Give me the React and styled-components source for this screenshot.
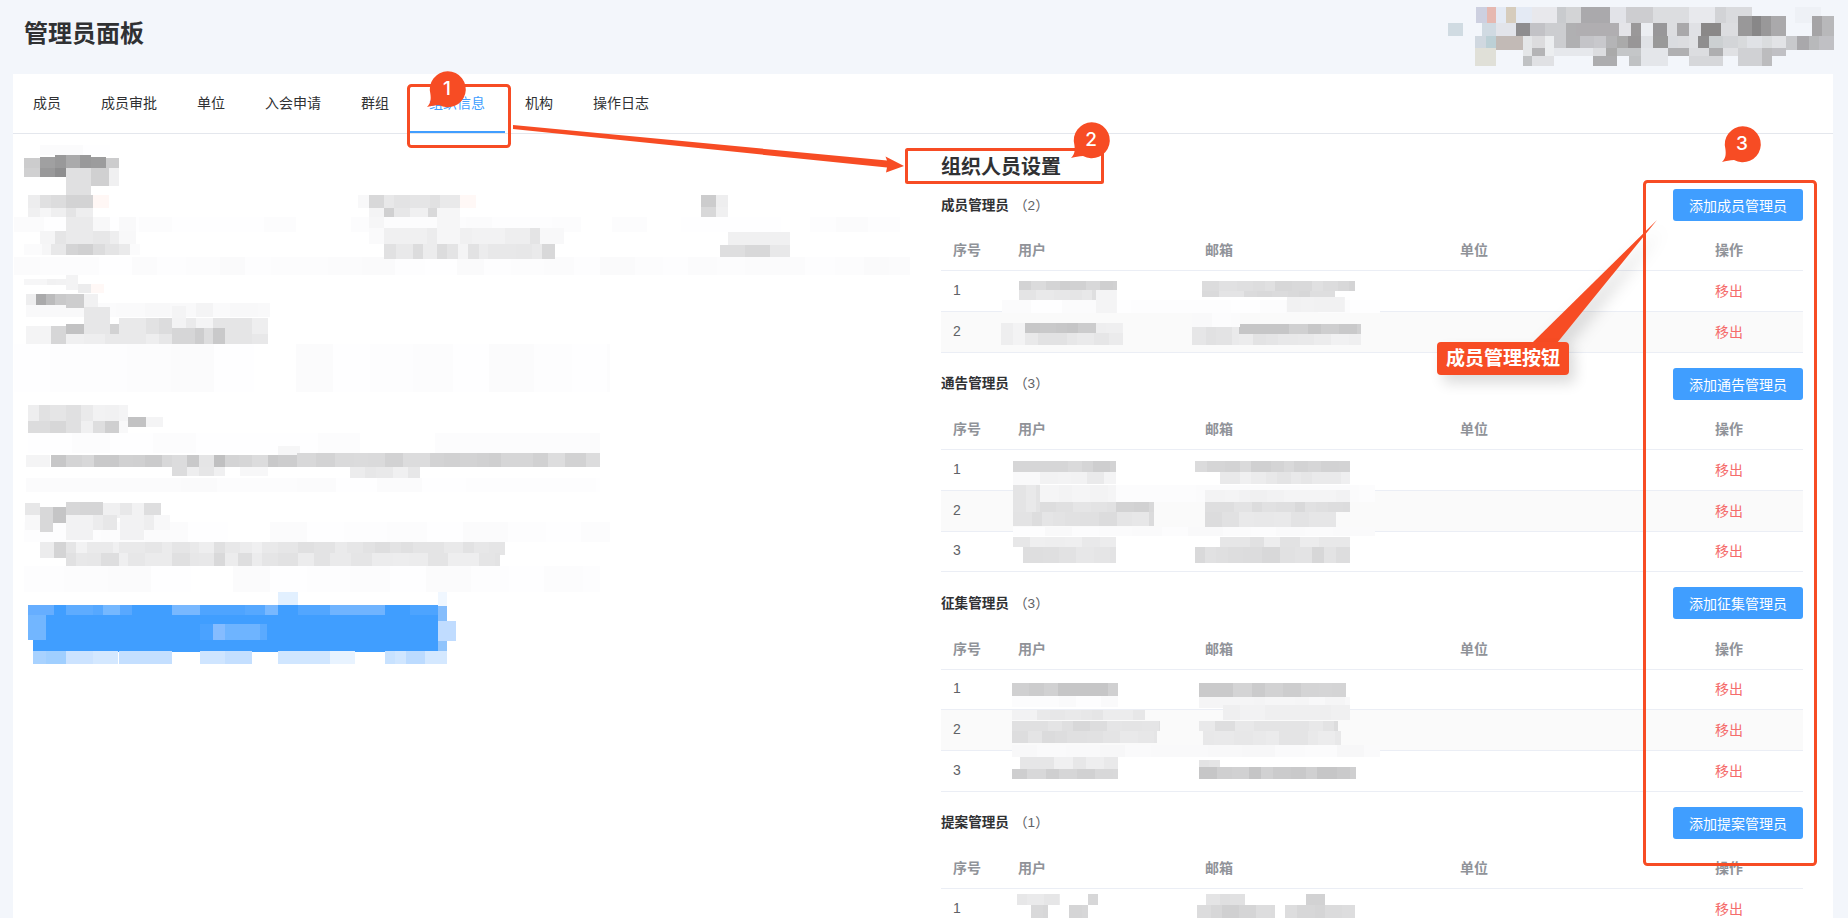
import styled, { createGlobalStyle } from "styled-components";

const GlobalStyle = createGlobalStyle`
  html, body {
    margin: 0;
    height: 918px;
    overflow: hidden;
    background: #f3f6fb;
    font-family: "Liberation Sans", "Noto Sans CJK SC", sans-serif;
  }
`;

const Page = styled.div`
  position: relative;
  width: 1848px;
  height: 918px;
  overflow: hidden;
`;

const Header = styled.header`
  display: flex;
  justify-content: space-between;
  height: 74px;
  padding: 0 14px 0 24px;
`;

const Title = styled.h1`
  margin: 0;
  padding-top: 18px;
  font-size: 24px;
  line-height: 32px;
  font-weight: 600;
  color: #303133;
`;

const Panel = styled.main`
  width: 1820px;
  height: 844px;
  margin-left: 13px;
  background: #fff;
  overflow: hidden;
`;

const Tabs = styled.nav`
  display: flex;
  height: 59px;
  border-bottom: 1px solid #e4e7ed;
`;

const Tab = styled.div`
  padding: 0 20px;
  font-size: 14px;
  line-height: 59px;
  color: ${(p) => (p.$active ? "#409eff" : "#303133")};
  box-shadow: ${(p) => (p.$active ? "inset 0 -2px 0 #409eff" : "none")};
`;

const Body = styled.div`
  display: flex;
`;

const LeftCol = styled.section`
  width: 928px;
  flex: none;
`;

const RightCol = styled.section`
  position: relative;
  width: 862px;
  flex: none;
`;

const Heading = styled.h2`
  margin: 0;
  padding: 19px 0 8px;
  font-size: 20px;
  line-height: 28px;
  font-weight: 600;
  color: #303133;
`;

const Section = styled.div`
  margin-bottom: 15px;
`;

const SectionHead = styled.div`
  display: flex;
  justify-content: space-between;
  align-items: center;
  margin-bottom: 9.4px;
`;

const SectionName = styled.span`
  padding-bottom: 3px;
  font-size: 13.6px;
  font-weight: 600;
  color: #303133;
  b {
    margin-left: 5px;
    font-weight: 400;
    color: #606266;
  }
`;

const AddButton = styled.button`
  width: 130px;
  height: 32px;
  padding: 0;
  border: 0;
  border-radius: 3px;
  background: #409eff;
  color: #fff;
  font: inherit;
  font-size: 14px;
`;

const Row = styled.div`
  display: grid;
  grid-template-columns: 65px 187px 255px 207px 148px;
  align-items: center;
  height: 40.8px;
  padding-bottom: 2px;
  box-sizing: border-box;
  border-bottom: 1px solid #ebeef5;
  background: ${(p) => (p.$striped ? "#fafafa" : "transparent")};
  font-size: 14px;
  font-weight: ${(p) => (p.$head ? 600 : 400)};
  color: ${(p) => (p.$head ? "#909399" : "#606266")};
`;

const Cell = styled.div`
  padding-left: ${(p) => (p.$center ? 0 : "12px")};
  text-align: ${(p) => (p.$center ? "center" : "left")};
`;

const RemoveLink = styled.span`
  color: #f56c6c;
`;

const MosaicOverlay = styled.svg`
  position: absolute;
  left: 0;
  top: 0;
  pointer-events: none;
`;

const Block = styled.svg`
  display: block;
  flex: none;
`;

const Annotations = styled.svg`
  position: absolute;
  left: 0;
  top: 0;
  pointer-events: none;
`;

const Marker = styled.div`
  position: absolute;
  left: ${(p) => p.$x - 12}px;
  top: ${(p) => p.$y - 14}px;
  width: 24px;
  height: 28px;
  text-align: center;
  font: 500 19px/28px "Inter", "Liberation Sans", sans-serif;
  color: #fff;
`;

const CalloutLabel = styled.div`
  position: absolute;
  left: 1437px;
  top: 342px;
  width: 132px;
  height: 33px;
  border-radius: 4px;
  background: #f74c24;
  box-shadow: 6px 8px 14px rgba(0, 0, 0, 0.14);
  color: #fff;
  font-size: 19px;
  font-weight: 700;
  line-height: 33px;
  text-align: center;
`;

const RED = "#f74c24";

const grey = (v) => `rgb(${v},${v},${Math.min(255, v + 1)})`;

// splits a band into uneven pixel cells so it reads as a censor mosaic
const band = ([x0, y0, x1, y1, base, step = 15]) => {
  const out = [];
  let x = x0;
  let seed = (x0 * 7 + y0 * 13) % 97;
  while (x < x1) {
    seed = (seed * 31 + 17) % 97;
    const w = Math.min(step - 5 + (seed % 11), x1 - x);
    const spread = base >= 240 ? 4 : 14;
    const v = Math.min(255, base + Math.round((seed / 96 - 0.5) * spread));
    out.push([x, y0, w, y1 - y0, grey(v)]);
    x += w;
  }
  return out;
};

const flat = (y0, y1, list) =>
  list.map(([a, b, c]) => [a, y0, b - a, y1 - y0, typeof c === "number" ? grey(c) : c]);

const headerBlocks = [
  ...flat(7, 23, [
    [1476, 1487, "#cdd0e0"], [1487, 1496, "#e6b8b0"], [1496, 1506, "#e4eaf4"], [1506, 1516, "#d6ccbc"],
    [1516, 1532, "#e4eaf4"], [1532, 1557, "#e8e8ec"], [1557, 1566, "#c9cbce"], [1566, 1581, "#d3d4d6"],
    [1581, 1610, "#aaa9ac"], [1610, 1626, "#e2e3e8"], [1626, 1653, "#cdcdd0"], [1653, 1689, "#dcdde0"],
    [1689, 1715, "#e8e9ed"], [1715, 1726, "#d2d3d6"], [1726, 1752, "#dadbde"], [1795, 1821, "#eef1f6"],
  ]),
  ...flat(16, 36, [
    [1738, 1752, "#999899"], [1752, 1761, "#888788"], [1761, 1771, "#999899"], [1771, 1786, "#aaa9ab"],
    [1812, 1822, "#a5a4a6"], [1822, 1834, "#b8b8ba"],
  ]),
  ...flat(23, 36, [
    [1448, 1463, "#d0dbe2"], [1482, 1496, "#d0dae2"], [1496, 1516, "#e2e4ea"], [1516, 1530, "#8e8d8f"],
    [1530, 1545, "#c2c2c6"], [1545, 1566, "#cccdd0"], [1566, 1576, "#b0b0b2"], [1576, 1619, "#b0aeb1"],
    [1619, 1631, "#e4e4e8"], [1631, 1641, "#9a9899"], [1641, 1653, "#eceef2"], [1653, 1667, "#989799"],
    [1667, 1677, "#dcdde0"], [1677, 1689, "#a9a8aa"], [1689, 1701, "#e0e1e5"], [1701, 1721, "#8a8888"],
    [1721, 1738, "#dcdde0"],
  ]),
  ...flat(36, 50, [
    [1475, 1486, "#d0d8e0"], [1486, 1496, "#bcd0d6"], [1496, 1523, "#c2bab6"], [1523, 1532, "#e4e6e8"],
    [1532, 1545, "#dcdcde"], [1545, 1554, "#eceef0"], [1554, 1566, "#cccdd0"], [1566, 1580, "#b0b0b2"],
    [1580, 1594, "#c4c4c8"], [1594, 1606, "#c8c8cc"], [1606, 1617, "#b4b4b6"], [1617, 1628, "#aaaaaa"],
    [1628, 1641, "#989697"], [1641, 1653, "#e0e2e6"], [1653, 1668, "#999999"], [1668, 1678, "#dadce0"],
    [1678, 1689, "#dcdde0"], [1689, 1698, "#e0e1e4"], [1698, 1709, "#8f8e8f"], [1709, 1723, "#ccd0d2"],
    [1723, 1738, "#d3d5d8"], [1738, 1747, "#d8dadc"], [1747, 1762, "#e0e2e6"], [1762, 1772, "#dadcde"],
    [1772, 1786, "#e2e3e6"], [1786, 1797, "#c8c9cc"], [1797, 1809, "#a9a8ab"], [1809, 1819, "#b8b9bb"],
    [1819, 1834, "#c0c0c4"],
  ]),
  ...flat(48, 56, [
    [1475, 1496, "#e0e0d8"], [1523, 1532, "#e4e6e8"], [1532, 1545, "#b4b4b6"], [1545, 1554, "#eceef0"],
    [1554, 1593, "#e6e8ec"], [1593, 1606, "#dcdde0"], [1606, 1617, "#aaaaaa"], [1617, 1641, "#c4c6c8"],
    [1641, 1668, "#e4e6ea"], [1668, 1689, "#b0b0b2"], [1689, 1709, "#dcdde0"], [1709, 1723, "#aeaeb0"],
    [1723, 1738, "#e0e1e4"], [1738, 1762, "#d0d1d4"], [1762, 1772, "#bcbcbe"], [1772, 1786, "#c0c0c4"],
  ]),
  ...flat(56, 66, [
    [1475, 1496, "#e0e0d8"], [1523, 1532, "#c0c2c4"], [1532, 1554, "#e0e1e4"], [1593, 1617, "#adadaf"],
    [1629, 1641, "#c0c2c4"], [1641, 1668, "#e4e6ea"], [1689, 1723, "#d6d7da"], [1738, 1762, "#d0d1d4"],
    [1762, 1772, "#bcbcbe"],
  ]),
];

const leftBlocks = [
  // faint halo under the text lines
  ...[
    [14, 217, 910, 232, 253, 30], [14, 257, 910, 275, 252, 30], [14, 344, 610, 392, 253, 40],
    [28, 433, 600, 453, 253, 40], [26, 478, 600, 492, 252, 40], [24, 522, 610, 542, 253, 40],
    [24, 566, 600, 592, 253, 40], [26, 303, 270, 317, 250, 30],
    [40, 145, 110, 155, 253, 40],
  ].flatMap(band),

  // heading block
  ...flat(155, 168, [[55, 66, 153], [66, 80, 170], [80, 91, 153]]),
  ...flat(157, 168, [[40, 55, 160], [91, 106, 156]]),
  ...flat(158, 168, [[24, 40, 204], [106, 119, 204]]),
  ...flat(168, 177, [[24, 40, 208], [40, 55, 153], [55, 66, 142]]),
  ...flat(168, 195, [[66, 91, 224]]),
  ...flat(168, 186, [[91, 109, 208], [109, 119, 240]]),

  // first paragraph
  ...flat(195, 208, [[28, 40, 237], [40, 51, 224], [51, 66, 220], [66, 93, 211], [93, 109, "#fff7f5"]]),
  ...flat(208, 217, [[28, 40, 240], [40, 51, 246], [51, 66, 239], [66, 76, 228], [76, 93, 238]]),
  ...flat(217, 231, [[66, 93, 234], [93, 110, 248], [119, 136, 249]]),
  ...flat(231, 244, [[40, 55, 245], [55, 66, 229], [66, 93, 234], [93, 110, 231], [110, 119, 238], [119, 136, 248]]),
  ...flat(244, 255, [
    [24, 42, 251], [42, 51, 246], [51, 66, 232], [66, 78, 212], [78, 93, 208], [93, 105, 220], [105, 119, 228],
    [119, 130, 234], [130, 140, 251],
  ]),
  ...flat(195, 208, [
    [358, 369, 248], [369, 384, 216], [384, 394, 232], [394, 410, 227], [410, 430, 229], [430, 440, 225],
    [440, 460, 233], [460, 476, "#fff8f6"],
  ]),
  ...flat(208, 217, [[369, 384, 244], [384, 394, 208], [394, 410, 231], [410, 428, 240], [428, 437, 217], [437, 460, 246]]),
  ...flat(217, 228, [[369, 384, 246], [437, 460, 246]]),
  ...flat(228, 244, [
    [369, 384, 250], [384, 427, 240], [427, 437, 236], [437, 460, 246], [460, 472, 240], [472, 505, 242],
    [505, 530, 238], [530, 540, 228], [540, 564, 248],
  ]),
  ...flat(244, 259, [
    [384, 396, 225], [396, 413, 233], [413, 423, 220], [423, 437, 236], [437, 447, 220], [447, 458, 228],
    [458, 468, 244], [468, 479, 226], [479, 488, 236], [488, 516, 232], [516, 532, 231], [532, 542, 234],
    [542, 555, 216],
  ]),
  ...flat(195, 207, [[701, 716, 204], [716, 728, 238]]),
  ...flat(207, 217, [[701, 716, 216], [716, 728, 240]]),
  ...flat(232, 245, [[728, 790, 240]]),
  ...flat(245, 257, [[720, 745, 222], [745, 770, 216], [770, 790, 232]]),

  // second paragraph
  ...flat(275, 290, [[66, 78, 243]]),
  ...flat(279, 285, [[24, 47, 246], [47, 56, 241], [56, 66, 242]]),
  ...flat(284, 293, [[78, 91, 236], [91, 104, "#fff8f6"]]),
  ...flat(294, 305, [[26, 36, 238], [36, 46, 170], [46, 55, 187], [55, 66, 201]]),
  ...flat(294, 308, [[66, 84, 205], [84, 98, 241]]),
  ...flat(307, 334, [[84, 110, 231]]),
  ...flat(303, 317, [[196, 213, 244]]),
  ...flat(306, 318, [[172, 186, 244]]),
  ...flat(318, 334, [[119, 146, 233], [146, 159, 226], [159, 172, 220], [172, 186, 243], [186, 196, 234], [196, 213, 244], [213, 225, 229], [225, 252, 229], [252, 268, 238]]),
  ...flat(326, 344, [[26, 51, 244], [51, 66, 214]]),
  ...flat(324, 334, [[66, 84, 194], [110, 119, 210]]),
  ...flat(328, 344, [[172, 195, 214], [195, 204, 205], [204, 213, 221], [213, 225, 201]]),
  ...flat(334, 344, [[66, 84, 240], [84, 105, 238], [105, 146, 233], [146, 159, 238], [159, 172, 231], [225, 252, 229], [252, 268, 232]]),

  // third paragraph
  ...flat(405, 421, [
    [28, 39, 238], [39, 50, 225], [50, 66, 229], [66, 81, 224], [81, 93, 234], [93, 105, 242], [105, 119, 241],
    [119, 128, 244],
  ]),
  ...flat(421, 433, [[28, 50, 220], [50, 66, 215], [66, 81, 224], [81, 93, 240], [93, 105, 222], [105, 119, 207], [119, 128, 248]]),
  ...flat(417, 427, [[128, 146, 194], [146, 163, 244]]),
  ...flat(446, 455, [[278, 300, 246]]),
  ...flat(455, 467, [
    [26, 50, 244], [51, 66, 199], [66, 82, 212], [82, 94, 216], [94, 105, 201], [105, 119, 201], [119, 133, 209],
    [133, 145, 208], [145, 162, 203], [162, 172, 216], [172, 187, 220], [187, 199, 201], [199, 214, 229],
    [214, 225, 192], [225, 239, 212], [239, 252, 214], [252, 268, 220], [268, 278, 201], [278, 297, 205],
  ]),
  ...flat(467, 476, [[172, 187, 220], [187, 199, 238], [199, 214, 230], [214, 225, 240], [240, 268, 247]]),
  ...[[297, 453, 600, 467, 214, 16], [350, 467, 420, 478, 238, 16]].flatMap(band),

  // fourth paragraph
  ...flat(503, 518, [[25, 40, 231], [103, 120, 240], [120, 132, 232], [132, 144, 242], [144, 161, 222]]),
  ...flat(507, 532, [[40, 53, 216]]),
  ...flat(507, 523, [[53, 66, 197]]),
  ...flat(502, 515, [[66, 80, 215], [80, 103, 213]]),
  ...flat(515, 530, [
    [25, 40, 248], [66, 93, 242], [93, 103, 236], [103, 117, 231], [120, 144, 242], [144, 154, 238], [154, 170, 248],
  ]),
  ...flat(530, 540, [[66, 93, 242], [120, 144, 242]]),
  ...flat(542, 553, [
    [40, 54, 236], [54, 66, 212], [66, 76, 229], [76, 87, 242], [87, 113, 234], [113, 119, 240], [119, 145, 233],
    [145, 162, 230], [162, 172, 235], [172, 190, 229], [190, 199, 233], [199, 214, 238], [214, 225, 224],
    [225, 240, 232], [240, 252, 236], [252, 262, 240], [262, 278, 233], [278, 298, 230], [298, 314, 224],
  ]),
  ...flat(553, 558, [[40, 54, 236], [54, 66, 212]]),
  ...flat(553, 566, [
    [66, 76, 225], [76, 87, 232], [87, 101, 231], [101, 119, 222], [119, 128, 239], [128, 145, 231], [145, 172, 235],
    [172, 190, 224], [190, 199, 231], [199, 214, 232], [214, 225, 217], [225, 238, 236], [238, 252, 222],
    [252, 262, 236], [262, 278, 229], [278, 298, 226], [298, 314, 236],
  ]),
  ...[[314, 542, 505, 555, 228, 16], [314, 553, 500, 566, 232, 18]].flatMap(band),

  // blue link
  ...flat(592, 606, [[278, 298, "#e2f0ff"], [438, 447, "#f0f7ff"]]),
  ...flat(605, 615, [
    [28, 54, "#66aeff"], [54, 66, "#409eff"], [66, 93, "#5eacff"], [93, 103, "#56a8ff"], [103, 120, "#75b8ff"],
    [120, 132, "#58a8ff"], [132, 172, "#409eff"], [172, 200, "#78b8ff"], [200, 245, "#4ea4ff"],
    [245, 265, "#56a8ff"], [265, 278, "#78b8ff"], [278, 298, "#409eff"], [298, 330, "#52a6ff"],
    [330, 385, "#70b4ff"], [385, 410, "#409eff"], [410, 438, "#4da4ff"],
  ]),
  ...flat(615, 640, [[28, 46, "#72b6ff"], [46, 438, "#409eff"]]),
  ...flat(624, 640, [[200, 213, "#4aa2ff"], [213, 225, "#85bcff"], [225, 260, "#6eb4ff"], [260, 267, "#5aaaff"]]),
  ...flat(640, 652, [[33, 438, "#409eff"]]),
  ...flat(606, 621, [[438, 447, "#85bdfc"]]),
  ...flat(621, 641, [[438, 456, "#c0dcff"]]),
  ...flat(641, 651, [[438, 447, "#90c4fc"]]),
  ...flat(651, 664, [
    [33, 46, "#a8d2ff"], [46, 66, "#a0cfff"], [66, 93, "#cce3ff"], [93, 118, "#d4e8ff"], [119, 172, "#c4dfff"],
    [200, 225, "#cfe5ff"], [225, 252, "#c4dfff"], [278, 330, "#d0e6ff"], [330, 355, "#e8f3ff"],
    [385, 395, "#c8e2ff"], [395, 406, "#d0e6ff"], [406, 425, "#bcdbff"], [425, 447, "#d4e8ff"],
  ]),
];

const tableBlocks = [
  // 成员管理员
  [1002, 300, 1380, 313, 252, 30],
  [1019, 281, 1117, 290, 214], [1019, 290, 1096, 300, 226], [1096, 290, 1117, 313, 238],
  [1202, 281, 1355, 291, 218], [1202, 291, 1335, 297, 222], [1287, 297, 1345, 312, 242],
  [1001, 323, 1025, 345, 238], [1025, 323, 1096, 333, 204], [1096, 323, 1123, 333, 240], [1025, 333, 1123, 345, 230],
  [1192, 327, 1239, 345, 232], [1239, 324, 1361, 334, 204], [1239, 334, 1361, 345, 234], [1192, 313, 1240, 327, 250],
  // 通告管理员
  [1013, 461, 1116, 472, 212], [1195, 461, 1350, 472, 214],
  [1040, 472, 1116, 484, 238], [1013, 472, 1040, 485, 250], [1220, 472, 1350, 484, 234],
  [1116, 485, 1375, 502, 251, 40], [1013, 485, 1040, 512, 230], [1040, 485, 1116, 502, 244],
  [1040, 502, 1116, 512, 222], [1116, 502, 1154, 512, 212],
  [1013, 512, 1154, 526, 226], [1205, 490, 1350, 502, 242], [1205, 502, 1350, 512, 222], [1205, 512, 1336, 527, 226],
  [1013, 527, 1375, 536, 251, 30],
  [1013, 537, 1116, 547, 232], [1023, 547, 1116, 563, 224], [1220, 537, 1350, 547, 230], [1195, 547, 1350, 563, 222],
  // 征集管理员
  [1012, 683, 1118, 696, 204], [1199, 683, 1346, 697, 208], [1012, 696, 1118, 707, 251], [1199, 697, 1350, 708, 246],
  [1012, 710, 1145, 720, 236], [1223, 705, 1350, 720, 240], [1012, 721, 1160, 731, 222], [1199, 721, 1338, 731, 226],
  [1012, 731, 1157, 743, 226], [1203, 731, 1341, 745, 232], [1012, 745, 1380, 757, 249, 30],
  [1020, 757, 1118, 769, 236], [1199, 760, 1220, 769, 234], [1012, 769, 1118, 779, 212], [1199, 767, 1356, 779, 204],
  // 提案管理员
  [1017, 894, 1060, 905, 230], [1088, 894, 1098, 905, 216], [1206, 894, 1245, 905, 230], [1306, 894, 1325, 905, 216],
  [1031, 905, 1048, 918, 216], [1069, 905, 1088, 918, 212], [1197, 905, 1275, 918, 214],
  [1285, 905, 1325, 918, 216], [1325, 905, 1355, 918, 222],
].flatMap(band);

const Pixels = ({ blocks }) =>
  blocks.map(([x, y, w, h, c], i) => (
    <rect key={i} x={x} y={y} width={w} height={h} fill={c} />
  ));

const tabs = ["成员", "成员审批", "单位", "入会申请", "群组", "组织信息", "机构", "操作日志"];

const sections = [
  { name: "成员管理员", kind: "成员", count: 2 },
  { name: "通告管理员", kind: "通告", count: 3 },
  { name: "征集管理员", kind: "征集", count: 3 },
  { name: "提案管理员", kind: "提案", count: 1 },
];

const AdminTable = ({ name, kind, count }) => (
  <Section>
    <SectionHead>
      <SectionName>
        {name}
        <b>（{count}）</b>
      </SectionName>
      <AddButton>添加{kind}管理员</AddButton>
    </SectionHead>
    <Row $head>
      <Cell>序号</Cell>
      <Cell>用户</Cell>
      <Cell>邮箱</Cell>
      <Cell>单位</Cell>
      <Cell $center>操作</Cell>
    </Row>
    {Array.from({ length: count }, (_, i) => (
      <Row key={i} $striped={i % 2 === 1}>
        <Cell>{i + 1}</Cell>
        <Cell />
        <Cell />
        <Cell />
        <Cell $center>
          <RemoveLink>移出</RemoveLink>
        </Cell>
      </Row>
    ))}
  </Section>
);

const drop = (x, y) =>
  `M${x - 20} ${y + 18}C${x - 16} ${y + 14} ${x - 16} ${y + 10} ${x - 16.6} ${y + 5}` +
  `A18 18 0 1 1 ${x - 8} ${y + 16}C${x - 12} ${y + 16} ${x - 16} ${y + 17} ${x - 20} ${y + 18}Z`;

export default function App() {
  return (
    <Page>
      <GlobalStyle />
      <Header>
        <Title>管理员面板</Title>
        <Block width="386" height="74" viewBox="1448 0 386 74" shapeRendering="crispEdges">
          <Pixels blocks={headerBlocks} />
        </Block>
      </Header>
      <Panel>
        <Tabs>
          {tabs.map((t) => (
            <Tab key={t} $active={t === "组织信息"}>
              {t}
            </Tab>
          ))}
        </Tabs>
        <Body>
          <LeftCol>
            <Block width="928" height="540" viewBox="13 134 928 540" shapeRendering="crispEdges">
              <Pixels blocks={leftBlocks} />
            </Block>
          </LeftCol>
          <RightCol>
            <Heading>组织人员设置</Heading>
            {sections.map((s) => (
              <AdminTable key={s.name} {...s} />
            ))}
            <MosaicOverlay width="862" height="784" viewBox="941 134 862 784" shapeRendering="crispEdges">
              <Pixels blocks={tableBlocks} />
            </MosaicOverlay>
          </RightCol>
        </Body>
      </Panel>

      <Annotations width="1848" height="918" viewBox="0 0 1848 918">
        <g fill="none" stroke={RED} strokeWidth="3">
          <rect x="408.5" y="85.5" width="101" height="61" rx="3" />
          <rect x="906.5" y="149.5" width="196" height="33" rx="1" />
          <rect x="1644.5" y="181.5" width="171" height="683" rx="3" />
        </g>
        <path
          d="M513 125L887 160.5L885.5 156.5L904 166L886 172.5L887 167.5L513 129Z"
          fill={RED}
        />
        <path d="M1532 343L1657 220L1557 343Z" fill={RED} style={{ filter: "drop-shadow(6px 8px 8px rgba(0,0,0,.16))" }} />
        <path d={drop(447, 89)} fill={RED} />
        <path d={drop(1091, 140)} fill={RED} />
        <path d={drop(1742, 144)} fill={RED} />
      </Annotations>
      <Marker $x={447} $y={89}>1</Marker>
      <Marker $x={1091} $y={140}>2</Marker>
      <Marker $x={1742} $y={144}>3</Marker>
      <CalloutLabel>成员管理按钮</CalloutLabel>
    </Page>
  );
}
